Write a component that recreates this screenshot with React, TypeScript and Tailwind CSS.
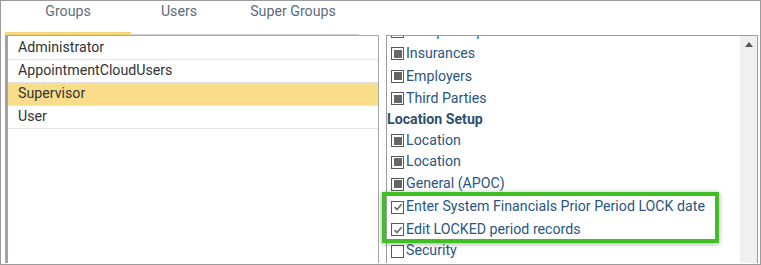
import React from "react";

const Box = ({ kind }: { kind: "partial" | "checked" | "empty" }) => (
  <span className="w-[13px] h-[13px] border border-[#5a5a5a] bg-white flex items-center justify-center shrink-0 mr-[2px]">
    {kind === "partial" && <span className="w-[8px] h-[8px] bg-[#666]" />}
    {kind === "checked" && (
      <svg width="10" height="10" viewBox="0 0 10 10">
        <path d="M1.5 5.2 L4 7.6 L8.6 2.2" fill="none" stroke="#6a6a6a" strokeWidth="1.6" />
      </svg>
    )}
  </span>
);

const Row = ({ label, kind, h, bold }: { label: string; kind?: "partial" | "checked" | "empty"; h: string; bold?: boolean }) => (
  <div className={`flex items-center pl-[4px] whitespace-nowrap ${h}`}>
    {kind && <Box kind={kind} />}
    <span className={bold ? "font-bold text-[#2e4f6e] -ml-[4px]" : "text-[#2a5682]"}>{label}</span>
  </div>
);

export default function App() {
  return (
    <div
      className="w-[761px] h-[265px] border border-[#9c9c9c] bg-white flex pl-[4px] pr-[2px] pb-px overflow-hidden"
      style={{ fontFamily: "Roboto, 'Liberation Sans', sans-serif", fontSize: "14.2px" }}
    >
      <div className="w-[374px] flex flex-col">
        <div className="h-[34px] flex items-start shrink-0">
          <div className="w-[126px] h-[34px] border-b-[3px] border-[#f5d77a] text-center text-[#5b7188]">Groups</div>
          <div className="w-[228px] h-[34px] border-b border-[#cfcfcf] flex text-[#5e6b78]">
            <span className="w-[96px] text-center">Users</span>
            <span className="w-[132px] text-center">Super Groups</span>
          </div>
        </div>
        <div className="flex-1 border border-[#a9a9a9] border-l-[3px] border-l-[#9ea4aa] border-b-0 text-[#333] pt-px">
          <div className="h-[23px] flex items-center pl-[10px] border-b border-[#e3e3e3]">Administrator</div>
          <div className="h-[23px] flex items-center pl-[10px] border-b border-[#e3e3e3]">AppointmentCloudUsers</div>
          <div className="h-[23px] flex items-center pl-[10px] border-b border-[#e3e3e3] bg-[#f9dd8a]">Supervisor</div>
          <div className="h-[23px] flex items-center pl-[10px] border-b border-[#e3e3e3]">User</div>
        </div>
      </div>
      <div className="flex-1 flex flex-col pt-[34px] pl-[7px] relative">
        <div className="flex-1 border border-[#9e9e9e] border-b-0 flex overflow-hidden">
          <div className="flex-1 flex flex-col -mt-[16px]">
            <Row label="Group Setup" kind="empty" h="h-[22.5px]" />
            <Row label="Insurances" kind="partial" h="h-[22.5px]" />
            <Row label="Employers" kind="partial" h="h-[22.5px]" />
            <Row label="Third Parties" kind="partial" h="h-[22.5px]" />
            <Row label="Location Setup" bold h="h-[20px]" />
            <Row label="Location" kind="partial" h="h-[21px]" />
            <Row label="Location" kind="partial" h="h-[22px]" />
            <Row label="General (APOC)" kind="partial" h="h-[22px]" />
            <Row label="Enter System Financials Prior Period LOCK date" kind="checked" h="h-[24px]" />
            <Row label="Edit LOCKED period records" kind="checked" h="h-[21px]" />
            <Row label="Security" kind="empty" h="h-[22px]" />
          </div>
          <div className="w-[17px] bg-[#f0f0f0] flex justify-center pt-[6px]">
            <svg width="8" height="5" viewBox="0 0 8 5">
              <path d="M0 5 L4 0 L8 5 Z" fill="#555" />
            </svg>
          </div>
        </div>
        <div className="absolute left-[3px] top-[191px] w-[337px] h-[51px] border-[4px] border-[#3fbe25] shadow-[0_1px_5px_rgba(0,0,0,0.35)]" />
      </div>
    </div>
  );
}
